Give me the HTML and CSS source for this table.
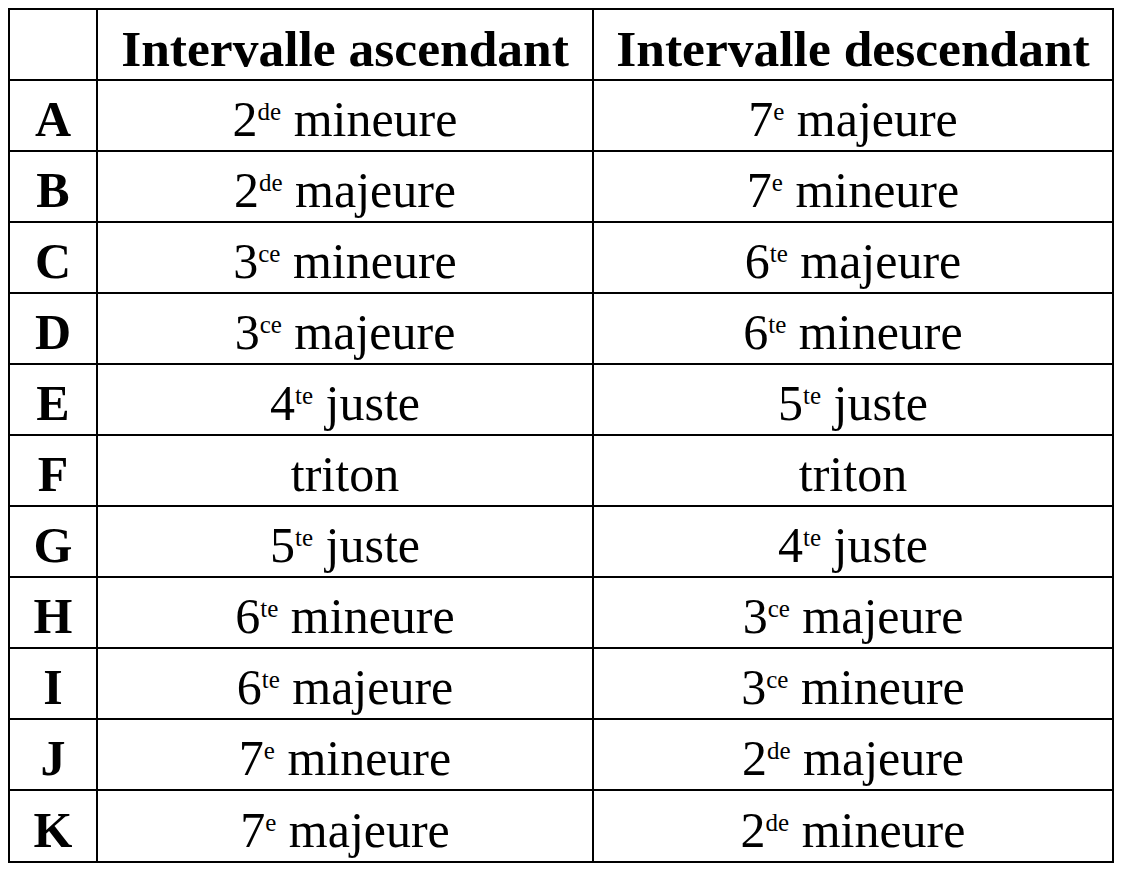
FILE: index.html
```html
<!DOCTYPE html>
<html lang="fr">
<head>
<meta charset="utf-8">
<title>Intervalles</title>
<link rel="stylesheet" href="styles.css">
</head>
<body>
<table class="intervals">
  <colgroup>
    <col class="c-letter">
    <col class="c-asc">
    <col class="c-desc">
  </colgroup>
  <thead>
    <tr class="head">
      <th></th>
      <th>Intervalle ascendant</th>
      <th>Intervalle descendant</th>
    </tr>
  </thead>
  <tbody>
    <tr><th>A</th><td>2<sup>de</sup> mineure</td><td>7<sup>e</sup> majeure</td></tr>
    <tr><th>B</th><td>2<sup>de</sup> majeure</td><td>7<sup>e</sup> mineure</td></tr>
    <tr><th>C</th><td>3<sup>ce</sup> mineure</td><td>6<sup>te</sup> majeure</td></tr>
    <tr><th>D</th><td>3<sup>ce</sup> majeure</td><td>6<sup>te</sup> mineure</td></tr>
    <tr><th>E</th><td>4<sup>te</sup> juste</td><td>5<sup>te</sup> juste</td></tr>
    <tr><th>F</th><td>triton</td><td>triton</td></tr>
    <tr><th>G</th><td>5<sup>te</sup> juste</td><td>4<sup>te</sup> juste</td></tr>
    <tr><th>H</th><td>6<sup>te</sup> mineure</td><td>3<sup>ce</sup> majeure</td></tr>
    <tr><th>I</th><td>6<sup>te</sup> majeure</td><td>3<sup>ce</sup> mineure</td></tr>
    <tr><th>J</th><td>7<sup>e</sup> mineure</td><td>2<sup>de</sup> majeure</td></tr>
    <tr class="last"><th>K</th><td>7<sup>e</sup> majeure</td><td>2<sup>de</sup> mineure</td></tr>
  </tbody>
</table>
</body>
</html>
```
FILE: styles.css
```css
html, body {
  background: #ffffff;
}
body {
  margin: 8px;
  font-family: "Liberation Serif", "DejaVu Serif", serif;
  color: #000000;
}
.intervals {
  border-collapse: separate;
  border-spacing: 0;
  table-layout: fixed;
  width: 1106px;
  border-top: 2px solid #000;
  border-left: 2px solid #000;
  font-size: 50px;
}
.c-letter { width: 88px; }
.c-asc { width: 496px; }
.c-desc { width: 520px; }
.intervals th,
.intervals td {
  box-sizing: border-box;
  border-right: 2px solid #000;
  border-bottom: 2px solid #000;
  padding: 0 0 2px 0;
  text-align: center;
  vertical-align: bottom;
  line-height: 57px;
  white-space: nowrap;
}
.intervals th {
  font-weight: bold;
}
.intervals thead th {
  font-size: 51.5px;
}
.intervals td {
  font-weight: normal;
}
.intervals tr {
  height: 71px;
}
.intervals tr.last {
  height: 72px;
}
.intervals sup {
  font-size: 0.5em;
  line-height: 0;
  vertical-align: 0.64em;
}
```
